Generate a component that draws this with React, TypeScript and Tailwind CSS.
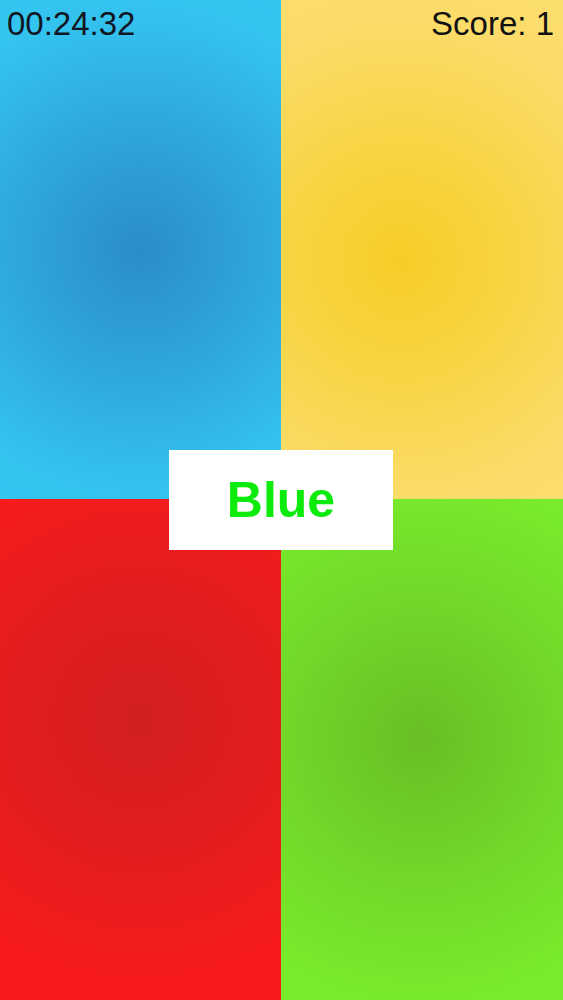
import React from "react";

export default function App() {
  return (
    <div className="relative w-full h-[1000px] overflow-hidden font-['Liberation_Sans',Arial,sans-serif]">
      <div className="grid grid-cols-[281px_1fr] grid-rows-[499px_1fr] w-full h-full">
        <div className="bg-[radial-gradient(circle_at_140px_250px,#2a8dc8_0%,#2fa6da_120px,#33c3ee_240px,#33c8f0_320px)]" />
        <div className="bg-[radial-gradient(circle_at_120px_260px,#f6cd27_0%,#f8d545_120px,#fbdc6a_240px,#fcde70_320px)]" />
        <div className="bg-[radial-gradient(circle_at_140px_220px,#d21f21_0%,#e21d1f_130px,#f71b1b_260px,#fa1b1b_340px)]" />
        <div className="bg-[radial-gradient(circle_at_140px_240px,#69be26_0%,#71d629_130px,#78eb2b_260px,#7aee2c_340px)]" />
      </div>
      <div className="absolute left-[7px] top-[4px] text-[33px] text-[#111622] leading-[40px]">00:24:32</div>
      <div className="absolute right-[9px] top-[4px] text-[33px] text-[#111111] leading-[40px]">Score: 1</div>
      <div className="absolute left-[169px] top-[450px] w-[224px] h-[100px] bg-white flex items-center justify-center">
        <span className="text-[50px] font-bold text-[#0ceb0c] leading-none">Blue</span>
      </div>
    </div>
  );
}
